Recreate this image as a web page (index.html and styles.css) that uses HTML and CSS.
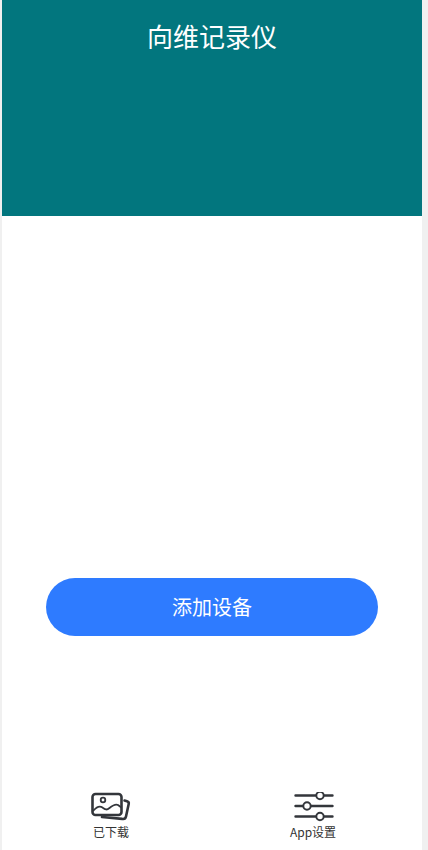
FILE: index.html
```html
<!DOCTYPE html>
<html lang="zh">
<head>
<meta charset="utf-8">
<title>向维记录仪</title>
<link rel="stylesheet" href="styles.css">
</head>
<body>
<div class="app">
  <header class="hero"><h1 class="title">向维记录仪</h1></header>
  <main class="main"><button class="add-btn">添加设备</button></main>
  <nav class="tabs">
    <div class="tab tab-left">
      <svg class="icon" width="42" height="32" viewBox="0 0 42 32" fill="none" stroke="#33363b" stroke-width="2.600" stroke-linecap="round" stroke-linejoin="round">
        <rect x="2.500" y="2" width="29" height="21" rx="3"/>
        <circle cx="13" cy="8" r="2.300" stroke-width="1.800"/>
        <path d="M3.500 18.500c3-3.500 6-5 9-3s4 3 7 .5 6-4.500 8.500-3l3 2.200" stroke-width="1.800"/>
        <path d="M34.500 8.500l2.500.7c1.300.4 2 1.500 1.700 2.800l-2.700 12.500c-.4 1.800-2 2.800-3.800 2.400L12 25"/>
      </svg>
      <span class="tab-label">已下载</span>
    </div>
    <div class="tab tab-right">
      <svg class="icon" width="42" height="32" viewBox="0 0 42 32" fill="none" stroke="#33363b" stroke-width="2.400" stroke-linecap="round">
        <path d="M3.500 3.500H23.500M32.500 3.500H40.500M3.500 14H10.500M19.500 14H40.500M3.500 24.500H23.500M32.500 24.500H40.500"/>
        <circle cx="28" cy="3.500" r="3.700" stroke-width="2"/>
        <circle cx="15" cy="14" r="3.700" stroke-width="2"/>
        <circle cx="28" cy="24.500" r="3.700" stroke-width="2"/>
      </svg>
      <span class="tab-label">App设置</span>
    </div>
  </nav>
</div>
</body>
</html>
```
FILE: styles.css
```css
html, body {
  margin: 0;
  padding: 0;
  height: 100%;
  background: #f0f0f0;
  overflow: hidden;
}
body {
  font-family: "Noto Sans CJK SC", "Liberation Sans", sans-serif;
}
.app {
  box-sizing: border-box;
  width: 420px;
  height: 850px;
  margin-left: 2px;
  background: #fff;
  display: flex;
  flex-direction: column;
}
.hero {
  height: 216px;
  background: #02767e;
  display: flex;
  justify-content: center;
  flex-shrink: 0;
}
.title {
  margin: 17px 0 0;
  font-size: 26px;
  line-height: 38px;
  font-weight: 400;
  color: #fff;
}
.main {
  flex: 1;
  padding: 362px 44px 0;
}
.add-btn {
  display: block;
  width: 332px;
  height: 58px;
  padding: 0 0 2px;
  border: 0;
  border-radius: 29px;
  background: #2e7bff;
  color: #fff;
  font: inherit;
  font-size: 20px;
}
.tabs {
  height: 60px;
  display: flex;
  flex-shrink: 0;
}
.tab {
  display: flex;
  flex-direction: column;
  align-items: center;
  width: 42px;
}
.tab-left { margin-left: 88px; }
.tab-right { margin-left: 160px; }
.icon { display: block; flex-shrink: 0; margin-top: 2px; }
.tab-label {
  margin-top: 0;
  font-size: 12px;
  line-height: 16px;
  color: #333;
  white-space: nowrap;
}
```
